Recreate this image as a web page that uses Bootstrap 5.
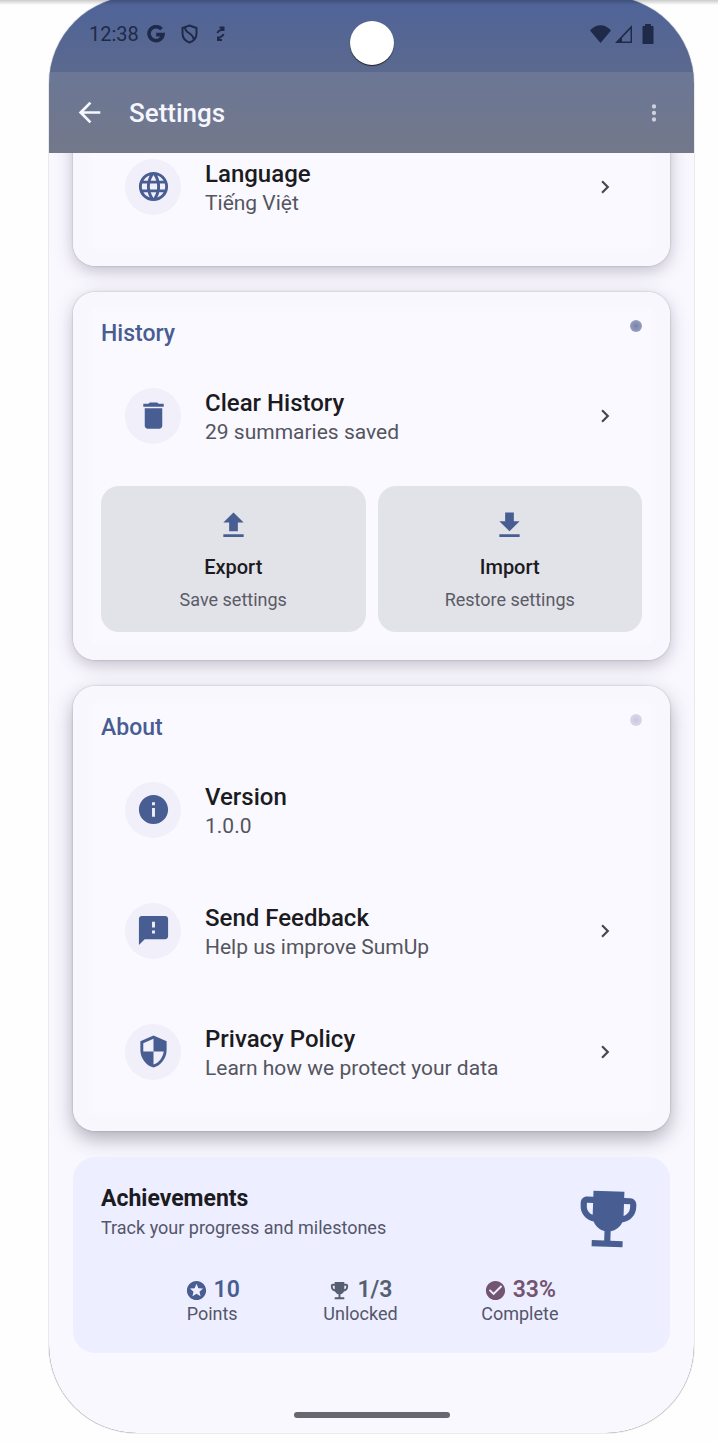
<!DOCTYPE html>
<html lang="en">
<head>
<meta charset="utf-8">
<meta name="viewport" content="width=device-width, initial-scale=1">
<title>Settings</title>
<link href="https://cdn.jsdelivr.net/npm/bootstrap@5.3.0/dist/css/bootstrap.min.css" rel="stylesheet">
<style>
  body { font-family: Roboto, "Noto Sans", sans-serif; background: #fefefe; color: #1b1b21; }
  button { font-family: inherit; }
  svg { display: block; flex: none; fill: currentColor; }
  .line-icon { fill: none; stroke: currentColor; stroke-width: 2; }
  .stage { padding: 0 24px 9px 49px; overflow: hidden; position: relative; }
  .top-shade { top: 0; left: 0; right: 0; height: 5px; z-index: 3; background: linear-gradient(rgba(0,0,0,.2), rgba(0,0,0,0)); }
  .phone { margin-top: -4px; border-radius: 88px; overflow: hidden; background: #faf8ff; box-shadow: 0 0 1px 0 #333; position: relative; }
  .status { height: 76px; padding: 0 38px 0 40px; background: linear-gradient(#4e6399, #5b698e); color: #1f2a48; font-size: 20px; }
  .camera { width: 44px; height: 44px; top: 25px; left: 50%; margin-left: -22px; background: #fff; box-shadow: 0 1px 1px #222; }
  .appbar { height: 81px; padding: 0 27px; background: linear-gradient(#6b7796, #73788a); color: #f6f6ff; }
  .appbar h1 { font-size: 26px; line-height: 32px; font-weight: 500; padding-left: 26px; }
  .icon-btn { padding: 0; border: 0; background: none; color: inherit; }
  .scroller { overflow: hidden; }
  .stack { padding: 0 24px 0 24px; margin-top: -52px; gap: 26px; }
  .panel { border: 0; border-radius: 22px; background: #faf9ff; padding: 25px 28px 19px;
    box-shadow: 0 5px 18px rgba(30,25,50,.26), 0 0 2px rgba(30,25,50,.3), inset 0 0 3px 17px #f8f7fd; }
  .panel-last { box-shadow: 0 8px 20px rgba(30,25,40,.34), 0 0 2px rgba(30,25,50,.3), inset 0 0 3px 17px #f8f7fd; }
  .panel h2 { font-size: 23px; line-height: 34px; font-weight: 500; color: #485d92; margin: 0 0 4px; }
  .dot { width: 12px; height: 12px; top: 28px; right: 28px; background: radial-gradient(#7583aa, #a5abc5); }
  .dot-soft { background: radial-gradient(#cac8df, #dfddef); }
  .entry { gap: 24px; padding: 24px; min-height: 121px; width: 100%; border: 0; background: none; color: inherit; text-align: left; }
  .bubble { width: 56px; height: 56px; flex: none; background: #f0effa; color: #485d92; }
  .entry-text { padding-top: 3px; }
  .entry-title { font-size: 24px; line-height: 29px; font-weight: 500; }
  .entry-sub { font-size: 21px; line-height: 28px; color: #54555e; }
  .chev { color: #47474f; }
  .tiles { gap: 12px; padding: 10px 0 9px; }
  .tile { flex: 1 1 0; border: 0; border-radius: 18px; background: #e2e2e9; padding: 25px 8px 20px; color: inherit; }
  .tile svg { color: #485d92; }
  .tile-title { font-size: 20px; line-height: 28px; font-weight: 500; margin-top: 13px; }
  .tile-sub { font-size: 18px; line-height: 24px; margin-top: 7px; color: #5a5b65; }
  .awards { border: 0; border-radius: 22px; background: #edeeff; padding: 25px 28px 28px; z-index: 1; }
  .awards h2 { font-size: 23px; line-height: 34px; font-weight: 700; margin: 0; }
  .awards-sub { font-size: 18px; line-height: 24px; color: #54566a; }
  .cup { transform: rotate(2deg); color: #485d92; }
  .stats { margin-top: 21px; }
  .stat { font-size: 23px; line-height: 26px; font-weight: 600; gap: 6px; }
  .stat-label { font-size: 18px; line-height: 22px; color: #54566a; }
  .blue { color: #485d92; } .slate { color: #565e71; } .plum { color: #735471; }
  .home { width: 156px; height: 6px; margin: 59px auto 15px; background: #68676f; }
</style>
</head>
<body>
<svg class="d-none" aria-hidden="true">
  <symbol id="chevron" viewBox="0 0 24 24"><path d="M10 6 8.590 7.410 13.170 12l-4.580 4.590L10 18l6-6z"/></symbol>
  <symbol id="trophy" viewBox="0 0 24 24"><path d="M19 5h-2V3H7v2H5c-1.100 0-2 .9-2 2v1c0 2.550 1.920 4.630 4.390 4.940.63 1.500 1.980 2.630 3.610 2.960V19H7v2h10v-2h-4v-3.100c1.630-.33 2.980-1.460 3.610-2.960C19.080 12.630 21 10.550 21 8V7c0-1.100-.9-2-2-2zM5 8V7h2v3.820C5.840 10.400 5 9.300 5 8zm14 0c0 1.300-.84 2.400-2 2.820V7h2v1z"/></symbol>
</svg>
<div class="stage">
  <div class="top-shade position-absolute"></div>
  <div class="phone">
    <div class="status d-flex align-items-center">
      <span>12:38</span>
      <svg class="line-icon ms-2" width="18" height="18" viewBox="0 0 18 18"><path stroke-width="3.6" d="M14.500 4.200A7 7 0 1 0 16 9.600H9.200"/></svg>
      <svg class="line-icon ms-3" width="17" height="20" viewBox="0 0 17 20"><path d="M8.500 1.500 15.500 4v5.500c0 4-3 7.500-7 9-4-1.500-7-5-7-9V4zM4 3.500C4 9.500 12.500 9 12.500 15"/></svg>
      <svg class="line-icon ms-3" width="14" height="18" viewBox="0 0 14 18"><path d="M3.500 8C4 5 7.500 6 9 3M5.500 2.500h4V6M9.500 9c-.5 3-4 2-5.500 5.500M4 11.500V15h4"/></svg>
      <svg class="ms-auto" width="21" height="18" viewBox="0 0 21 18"><path d="M10.500 18 0 5.500C6-1.500 15-1.500 21 5.500z"/></svg>
      <svg class="ms-1" width="17" height="18" viewBox="0 0 17 18"><path d="M17 0v18H0zM15.500 4 7 13v3.500h8.500z" fill-rule="evenodd"/></svg>
      <svg class="ms-2" width="16" height="20" viewBox="0 0 16 20"><path d="M5 0h6v2h2.500v18H2.500V2H5z"/></svg>
    </div>
    <div class="camera rounded-circle position-absolute"></div>
    <header class="appbar d-flex align-items-center">
      <button class="icon-btn" aria-label="Back"><svg width="27" height="27" viewBox="2 2 20 20"><path d="M20 11H7.830l5.590-5.590L12 4l-8 8 8 8 1.410-1.410L7.830 13H20z"/></svg></button>
      <h1 class="m-0">Settings</h1>
      <button class="icon-btn ms-auto" aria-label="More options"><svg width="26" height="26" viewBox="0 0 24 24" opacity=".7"><path d="M12 8a2 2 0 1 0 0-4 2 2 0 0 0 0 4zm0 2a2 2 0 1 0 0 4 2 2 0 0 0 0-4zm0 6a2 2 0 1 0 0 4 2 2 0 0 0 0-4z"/></svg></button>
    </header>
    <main class="scroller">
      <div class="stack d-flex flex-column">
        <section class="panel card">
          <button class="entry d-flex align-items-center">
            <span class="bubble rounded-circle d-flex align-items-center justify-content-center">
              <svg width="35" height="35" viewBox="0 0 24 24"><path d="M11.990 2C6.470 2 2 6.480 2 12s4.470 10 9.990 10C17.520 22 22 17.520 22 12S17.520 2 11.990 2zm6.930 6h-2.950c-.32-1.250-.78-2.450-1.380-3.560 1.840.63 3.370 1.910 4.330 3.560zM12 4.040c.83 1.200 1.480 2.530 1.910 3.960h-3.820c.43-1.430 1.080-2.760 1.910-3.960zM4.260 14C4.100 13.360 4 12.690 4 12s.1-1.360.26-2h3.380c-.08.66-.14 1.320-.14 2s.06 1.340.14 2H4.260zm.82 2h2.950c.32 1.250.78 2.450 1.380 3.560-1.840-.63-3.370-1.900-4.330-3.560zm2.950-8H5.080c.96-1.660 2.490-2.930 4.330-3.560C8.810 5.550 8.350 6.750 8.030 8zM12 19.960c-.83-1.200-1.480-2.530-1.910-3.960h3.820c-.43 1.430-1.080 2.760-1.910 3.960zM14.340 14H9.660c-.09-.66-.16-1.320-.16-2s.07-1.350.16-2h4.680c.09.65.16 1.320.16 2s-.07 1.340-.16 2zm.25 5.560c.6-1.110 1.060-2.310 1.380-3.560h2.950c-.96 1.650-2.490 2.930-4.330 3.560zM16.360 14c.08-.66.14-1.320.14-2s-.06-1.340-.14-2h3.380c.16.64.26 1.310.26 2s-.1 1.360-.26 2h-3.380z"/></svg>
            </span>
            <span class="entry-text flex-grow-1"><span class="entry-title d-block">Language</span><span class="entry-sub d-block">Tiếng Việt</span></span>
            <svg class="chev" width="26" height="26"><use href="#chevron"/></svg>
          </button>
        </section>

        <section class="panel card">
          <h2>History</h2>
          <span class="dot rounded-circle position-absolute"></span>
          <button class="entry d-flex align-items-center">
            <span class="bubble rounded-circle d-flex align-items-center justify-content-center">
              <svg width="35" height="35" viewBox="0 0 24 24"><path d="M6 19c0 1.100.9 2 2 2h8c1.100 0 2-.9 2-2V7H6v12zM19 4h-3.500l-1-1h-5l-1 1H5v2h14V4z"/></svg>
            </span>
            <span class="entry-text flex-grow-1"><span class="entry-title d-block">Clear History</span><span class="entry-sub d-block">29 summaries saved</span></span>
            <svg class="chev" width="26" height="26"><use href="#chevron"/></svg>
          </button>
          <div class="tiles d-flex">
            <button class="tile d-flex flex-column align-items-center">
              <svg width="29" height="29" viewBox="2 2 20 20"><path d="M9 16h6v-6h4l-7-7-7 7h4zm-4 2h14v2H5z"/></svg>
              <span class="tile-title">Export</span><span class="tile-sub">Save settings</span>
            </button>
            <button class="tile d-flex flex-column align-items-center">
              <svg width="29" height="29" viewBox="2 2 20 20"><path d="M19 9h-4V3H9v6H5l7 7 7-7zM5 18v2h14v-2H5z"/></svg>
              <span class="tile-title">Import</span><span class="tile-sub">Restore settings</span>
            </button>
          </div>
        </section>

        <section class="panel panel-last card">
          <h2>About</h2>
          <span class="dot dot-soft rounded-circle position-absolute"></span>
          <div class="entry d-flex align-items-center">
            <span class="bubble rounded-circle d-flex align-items-center justify-content-center">
              <svg width="35" height="35" viewBox="0 0 24 24"><path d="M12 2C6.480 2 2 6.480 2 12s4.480 10 10 10 10-4.480 10-10S17.520 2 12 2zm1 15h-2v-6h2v6zm0-8h-2V7h2v2z"/></svg>
            </span>
            <span class="entry-text flex-grow-1"><span class="entry-title d-block">Version</span><span class="entry-sub d-block">1.0.0</span></span>
          </div>
          <button class="entry d-flex align-items-center">
            <span class="bubble rounded-circle d-flex align-items-center justify-content-center">
              <svg width="35" height="35" viewBox="0 0 24 24"><path d="M20 2H4c-1.100 0-1.990.9-1.990 2L2 22l4-4h14c1.100 0 2-.9 2-2V4c0-1.100-.9-2-2-2zm-7 12h-2v-2h2v2zm0-4h-2V6h2v4z"/></svg>
            </span>
            <span class="entry-text flex-grow-1"><span class="entry-title d-block">Send Feedback</span><span class="entry-sub d-block">Help us improve SumUp</span></span>
            <svg class="chev" width="26" height="26"><use href="#chevron"/></svg>
          </button>
          <button class="entry d-flex align-items-center">
            <span class="bubble rounded-circle d-flex align-items-center justify-content-center">
              <svg width="35" height="35" viewBox="0 0 24 24"><path d="M12 1 3 5v6c0 5.550 3.840 10.740 9 12 5.160-1.260 9-6.450 9-12V5l-9-4zM12 12h7c-.53 4.120-3.280 7.790-7 8.940V12H5V6.300l7-3.110z" fill-rule="evenodd"/></svg>
            </span>
            <span class="entry-text flex-grow-1"><span class="entry-title d-block">Privacy Policy</span><span class="entry-sub d-block">Learn how we protect your data</span></span>
            <svg class="chev" width="26" height="26"><use href="#chevron"/></svg>
          </button>
        </section>

        <section class="awards card">
          <div class="d-flex justify-content-between">
            <div><h2>Achievements</h2><div class="awards-sub">Track your progress and milestones</div></div>
            <svg class="cup" width="68" height="74" viewBox="1 1 22 22"><use href="#trophy" width="24" height="24"/></svg>
          </div>
          <div class="stats d-flex justify-content-evenly text-center">
            <div><div class="stat blue d-flex align-items-center justify-content-center"><svg width="23" height="23" viewBox="0 0 24 24"><path d="M11.990 2C6.470 2 2 6.480 2 12s4.470 10 9.990 10C17.520 22 22 17.520 22 12S17.520 2 11.990 2zm4.240 16L12 15.450 7.770 18l1.120-4.810-3.730-3.230 4.920-.42L12 5l1.920 4.530 4.920.42-3.730 3.230L16.230 18z"/></svg>10</div><div class="stat-label">Points</div></div>
            <div><div class="stat slate d-flex align-items-center justify-content-center"><svg width="23" height="23"><use href="#trophy"/></svg>1/3</div><div class="stat-label">Unlocked</div></div>
            <div><div class="stat plum d-flex align-items-center justify-content-center"><svg width="23" height="23" viewBox="0 0 24 24"><path d="M12 2C6.480 2 2 6.480 2 12s4.480 10 10 10 10-4.480 10-10S17.520 2 12 2zm-2 15-5-5 1.410-1.410L10 14.170l7.590-7.590L19 8l-9 9z"/></svg>33%</div><div class="stat-label">Complete</div></div>
          </div>
        </section>
      </div>
      <div class="home rounded-pill"></div>
    </main>
  </div>
</div>
<script src="https://cdn.jsdelivr.net/npm/bootstrap@5.3.0/dist/js/bootstrap.bundle.min.js"></script>
</body>
</html>
